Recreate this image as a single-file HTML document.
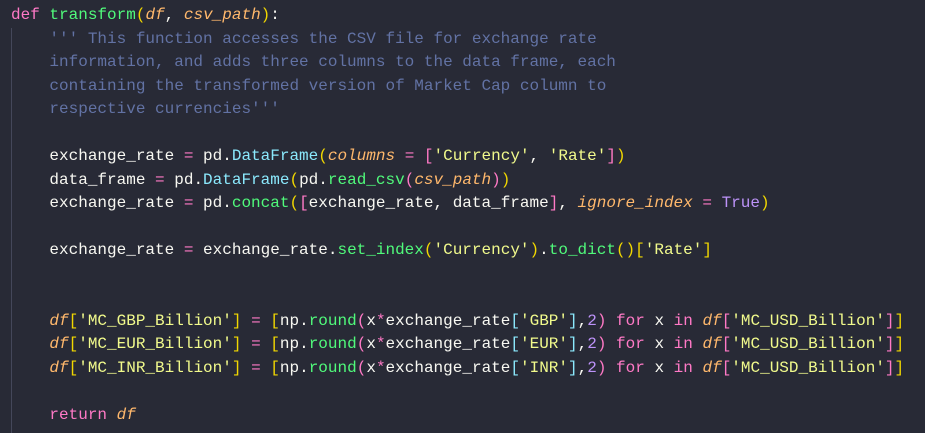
<!DOCTYPE html>
<html><head><style>
body{margin:0;background:#282a36;width:925px;height:433px;overflow:hidden;position:relative}
pre{margin:0;position:absolute;left:11px;top:4px;font:16px/23.5px "Liberation Mono",monospace;color:#f8f8f2;white-space:pre}
.g{position:absolute;left:11px;top:28px;width:1px;height:405px;background:#44475a}
.k{color:#ff79c6}.f{color:#50fa7b}.p{color:#ffb86c;font-style:italic}.c{color:#6272a4}.s{color:#f1fa8c}.b{color:#bd93f9}.y{color:#f1d700}.q{color:#ff79c6}.u{color:#8be9fd}.cl{color:#8be9fd}
</style></head><body><div class="g"></div><pre><span class="k">def</span> <span class="f">transform</span><span class="y">(</span><span class="p">df</span>, <span class="p">csv_path</span><span class="y">)</span>:
    <span class="c">''' This function accesses the CSV file for exchange rate
    information, and adds three columns to the data frame, each
    containing the transformed version of Market Cap column to
    respective currencies'''</span>

    exchange_rate <span class="k">=</span> pd.<span class="cl">DataFrame</span><span class="y">(</span><span class="p">columns</span> <span class="k">=</span> <span class="q">[</span><span class="s">'Currency'</span>, <span class="s">'Rate'</span><span class="q">]</span><span class="y">)</span>
    data_frame <span class="k">=</span> pd.<span class="cl">DataFrame</span><span class="y">(</span>pd.<span class="f">read_csv</span><span class="q">(</span><span class="p">csv_path</span><span class="q">)</span><span class="y">)</span>
    exchange_rate <span class="k">=</span> pd.<span class="f">concat</span><span class="y">(</span><span class="q">[</span>exchange_rate, data_frame<span class="q">]</span>, <span class="p">ignore_index</span> <span class="k">=</span> <span class="b">True</span><span class="y">)</span>

    exchange_rate <span class="k">=</span> exchange_rate.<span class="f">set_index</span><span class="y">(</span><span class="s">'Currency'</span><span class="y">)</span>.<span class="f">to_dict</span><span class="y">()</span><span class="y">[</span><span class="s">'Rate'</span><span class="y">]</span>


    <span class="p">df</span><span class="y">[</span><span class="s">'MC_GBP_Billion'</span><span class="y">]</span> <span class="k">=</span> <span class="y">[</span>np.<span class="f">round</span><span class="q">(</span>x<span class="k">*</span>exchange_rate<span class="u">[</span><span class="s">'GBP'</span><span class="u">]</span>,<span class="b">2</span><span class="q">)</span> <span class="k">for</span> x <span class="k">in</span> <span class="p">df</span><span class="q">[</span><span class="s">'MC_USD_Billion'</span><span class="q">]</span><span class="y">]</span>
    <span class="p">df</span><span class="y">[</span><span class="s">'MC_EUR_Billion'</span><span class="y">]</span> <span class="k">=</span> <span class="y">[</span>np.<span class="f">round</span><span class="q">(</span>x<span class="k">*</span>exchange_rate<span class="u">[</span><span class="s">'EUR'</span><span class="u">]</span>,<span class="b">2</span><span class="q">)</span> <span class="k">for</span> x <span class="k">in</span> <span class="p">df</span><span class="q">[</span><span class="s">'MC_USD_Billion'</span><span class="q">]</span><span class="y">]</span>
    <span class="p">df</span><span class="y">[</span><span class="s">'MC_INR_Billion'</span><span class="y">]</span> <span class="k">=</span> <span class="y">[</span>np.<span class="f">round</span><span class="q">(</span>x<span class="k">*</span>exchange_rate<span class="u">[</span><span class="s">'INR'</span><span class="u">]</span>,<span class="b">2</span><span class="q">)</span> <span class="k">for</span> x <span class="k">in</span> <span class="p">df</span><span class="q">[</span><span class="s">'MC_USD_Billion'</span><span class="q">]</span><span class="y">]</span>

    <span class="k">return</span> <span class="p">df</span></pre></body></html>
